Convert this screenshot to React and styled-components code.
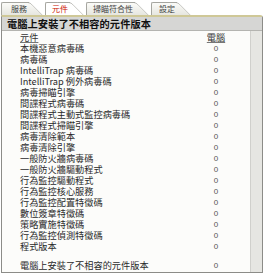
import React from "react";
import styled, { createGlobalStyle } from "styled-components";

const Global = createGlobalStyle`
  html, body { margin: 0; padding: 0; background: #ffffff; }
  body { font-family: "Noto Sans CJK TC", "Noto Sans", sans-serif; }
`;

const Page = styled.div`
  width: 265px;
  height: 273px;
  display: flex;
  flex-direction: column;
  background: #ffffff;
  overflow: hidden;
`;

const TabBar = styled.div`
  display: flex;
  align-items: flex-end;
  height: 15px;
  padding-left: 1px;
`;

const Tab = styled.div`
  position: relative;
  height: 12px;
  margin-right: 16px;
  padding: 0 2px 0 ${(p) => p.$pl}px;
  display: flex;
  align-items: center;
  font-size: 8px;
  line-height: 12px;
  white-space: nowrap;
  color: ${(p) => (p.$active ? "#cc1100" : "#444444")};
  background: ${(p) => (p.$active ? "#ffffff" : "linear-gradient(#fbfbf8, #e6e6e0)")};
  border-left: 1px solid #a6a6a0;
  border-top: 1px solid #a6a6a0;
  border-top-left-radius: 2px;
  z-index: ${(p) => (p.$active ? 2 : 1)};
  &::after {
    content: "";
    position: absolute;
    top: -1px;
    left: 100%;
    width: 13px;
    height: 12px;
    background: ${(p) => (p.$active ? "#ffffff" : "linear-gradient(#fbfbf8, #e6e6e0)")};
    border-top: 1px solid #a6a6a0;
    border-right: 1px solid #a6a6a0;
    border-top-right-radius: 3px;
    transform: skewX(45deg);
    transform-origin: bottom left;
    z-index: -1;
  }
`;

const Panel = styled.div`
  margin: 0 2px 0 1px;
  height: 256px;
  display: flex;
  flex-direction: column;
  border: 1px solid #8c8c88;
  border-top: 2px solid #cfc897;
  border-top-right-radius: 3px;
  position: relative;
  z-index: 3;
`;

const HeaderBar = styled.div`
  height: 13px;
  display: flex;
  align-items: center;
  padding-left: 5px;
  background: #d6d6d4;
  border-bottom: 1px solid #b4b4b0;
  font-size: 10.2px;
  line-height: 13px;
  font-weight: 700;
  color: #111111;
  letter-spacing: 0.1px;
  white-space: nowrap;
`;

const Body = styled.div`
  flex: 1;
  display: flex;
  min-height: 0;
`;

const Content = styled.div`
  flex: 1;
  background: #fcfcfa;
  padding-top: 1px;
  display: flex;
  flex-direction: column;
`;

const Strip = styled.div`
  width: 11px;
  background: #e6e6e2;
  border-left: 1px solid #d0d0cc;
`;

const Row = styled.div`
  height: 11px;
  display: grid;
  grid-template-columns: 176px 40px;
  align-items: center;
  padding-left: 18px;
  font-size: 9.2px;
  line-height: 11px;
  color: #2a2a2a;
  margin-top: ${(p) => (p.$gap ? 8 : 0)}px;
`;

const Name = styled.span`
  white-space: nowrap;
  ${(p) => p.$head && "text-decoration: underline; text-decoration-color: #777; color: #333;"}
`;

const Value = styled.span`
  text-align: center;
  font-family: "Liberation Sans", Arial, sans-serif;
  font-size: 8px;
  color: #555555;
  ${(p) =>
    p.$head &&
    `font-family: "Noto Sans CJK TC", sans-serif; font-size: 9.2px; color: #333; text-decoration: underline; text-decoration-color: #777;`}
`;

const items = [
  "本機惡意病毒碼",
  "病毒碼",
  "IntelliTrap 病毒碼",
  "IntelliTrap 例外病毒碼",
  "病毒掃瞄引擎",
  "間諜程式病毒碼",
  "間諜程式主動式監控病毒碼",
  "間諜程式掃瞄引擎",
  "病毒清除範本",
  "病毒清除引擎",
  "一般防火牆病毒碼",
  "一般防火牆驅動程式",
  "行為監控驅動程式",
  "行為監控核心服務",
  "行為監控配置特徵碼",
  "數位簽章特徵碼",
  "策略實施特徵碼",
  "行為監控偵測特徵碼",
  "程式版本",
];

const tabs = [
  { label: "服務", pl: 9 },
  { label: "元件", pl: 6, active: true },
  { label: "掃瞄符合性", pl: 6 },
  { label: "設定", pl: 7 },
];

export default function App() {
  return (
    <Page>
      <Global />
      <TabBar>
        {tabs.map((t) => (
          <Tab key={t.label} $active={t.active} $pl={t.pl}>
            {t.label}
          </Tab>
        ))}
      </TabBar>
      <Panel>
        <HeaderBar>電腦上安裝了不相容的元件版本</HeaderBar>
        <Body>
          <Content>
            <Row>
              <Name $head>元件</Name>
              <Value $head>電腦</Value>
            </Row>
            {items.map((name) => (
              <Row key={name}>
                <Name>{name}</Name>
                <Value>0</Value>
              </Row>
            ))}
            <Row $gap>
              <Name>電腦上安裝了不相容的元件版本</Name>
              <Value>0</Value>
            </Row>
          </Content>
          <Strip />
        </Body>
      </Panel>
    </Page>
  );
}
